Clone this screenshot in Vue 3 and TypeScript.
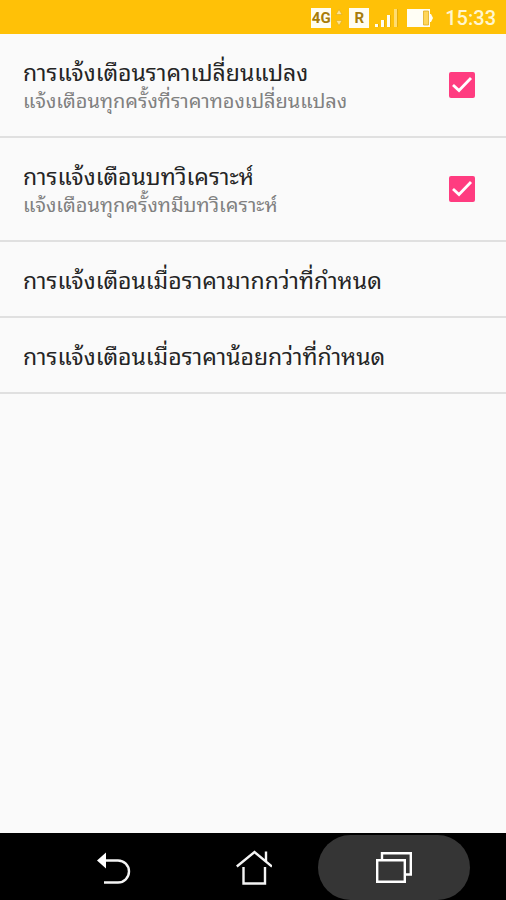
<script setup lang="ts">
import { reactive } from 'vue'

interface Preference {
  id: string
  title: string
  summary: string
  enabled: boolean
}

const toggles = reactive<Preference[]>([
  {
    id: 'price-change',
    title: 'การแจ้งเตือนราคาเปลี่ยนแปลง',
    summary: 'แจ้งเตือนทุกครั้งที่ราคาทองเปลี่ยนแปลง',
    enabled: true,
  },
  {
    id: 'analysis',
    title: 'การแจ้งเตือนบทวิเคราะห์',
    summary: 'แจ้งเตือนทุกครั้งทมีบทวิเคราะห์',
    enabled: true,
  },
])

const limits: string[] = [
  'การแจ้งเตือนเมื่อราคามากกว่าที่กำหนด',
  'การแจ้งเตือนเมื่อราคาน้อยกว่าที่กำหนด',
]
</script>

<template>
  <div class="screen">
    <header class="status">
      <span class="badge">4G</span>
      <svg class="arrows" width="8" height="20" viewBox="0 0 8 20">
        <path d="M1 6.500L4 1.500L7 6.500ZM1 12.500L4 17.500L7 12.500Z" fill="#ffe48f" stroke="#d6a51a" stroke-width=".5" />
      </svg>
      <span class="badge roaming">R</span>
      <svg class="signal" width="24" height="20" viewBox="0 0 24 20">
        <path d="M1 16h3v3H1zM7 12h3v7H7zM13 7h3v12h-3z" fill="#fffdf0" />
        <path d="M20 1h3v18h-3z" fill="#ffdc70" />
        <path d="M4.500 16v3M10.500 12v7M16.500 7v12M23.500 1v18" stroke="#d9a30c" stroke-width=".7" />
      </svg>
      <svg class="battery" width="26" height="20" viewBox="0 0 26 20">
        <path d="M0 1h23v5h1l2 4-2 4h-1v5H0z" fill="#fffef5" />
        <path d="M16.500 3h5v14h-5z" fill="#ffd65a" stroke="#e0ad20" stroke-width=".8" />
      </svg>
      <time class="clock">15:33</time>
    </header>

    <main class="list">
      <label v-for="item in toggles" :key="item.id" class="row toggle" :for="item.id">
        <span class="texts">
          <span class="title">{{ item.title }}</span>
          <span class="summary">{{ item.summary }}</span>
        </span>
        <span class="box">
          <input :id="item.id" v-model="item.enabled" type="checkbox" />
          <svg v-if="item.enabled" class="tick" width="26" height="26" viewBox="0 0 26 26">
            <path d="M4 13L10 18.500L22 6" fill="none" stroke="#fff" stroke-width="2.800" />
          </svg>
        </span>
      </label>
      <button v-for="limit in limits" :key="limit" type="button" class="row limit">
        <span class="title">{{ limit }}</span>
      </button>
    </main>

    <nav class="nav">
      <button type="button" aria-label="Back">
        <svg width="36" height="36" viewBox="0 0 36 36">
          <path d="M10 10.500H22A10.800 10.800 0 0 1 22 32.500H8" fill="none" stroke="#f4f4f4" stroke-width="2.400" />
          <path d="M1 10.500L10 2.500V18.500Z" fill="#fff" />
        </svg>
      </button>
      <button type="button" aria-label="Home">
        <svg width="36" height="36" viewBox="0 0 36 36">
          <path d="M.8 16.500L18.500 2L36 16.500M30 1.500V11.500M7.500 17V33.500H29V17" fill="none" stroke="#f4f4f4" stroke-width="2.400" />
        </svg>
      </button>
      <button type="button" class="active" aria-label="Recent apps">
        <svg width="36" height="36" viewBox="0 0 36 36">
          <path d="M6 9V3.200H34.800V24.500H30M1.200 10.200H28.800V31.800H1.200Z" fill="none" stroke="#fff" stroke-width="2.400" />
        </svg>
      </button>
    </nav>
  </div>
</template>

<style>
body {
  background: #fafafa;
}
</style>

<style scoped>
.screen {
  display: flex;
  flex-direction: column;
  min-height: 100vh;
  background: #fafafa;
  font-family: "Noto Sans Thai Looped", "Noto Looped Thai", "Droid Sans Thai", Loma, Waree, Garuda, "Noto Sans", sans-serif;
}

.status {
  display: flex;
  align-items: center;
  justify-content: flex-end;
  box-sizing: border-box;
  height: 34px;
  padding: 2px 10px 0 0;
  background: #ffc107;
  font-family: Roboto, sans-serif;
}

.badge {
  width: 20px;
  height: 20px;
  background: #fffdf0;
  color: #a87c08;
  font-size: 15px;
  font-weight: 700;
  line-height: 20px;
  text-align: center;
}

.arrows {
  margin: 0 6px 0 4px;
}

.roaming {
  margin-right: 5px;
}

.battery {
  margin: 0 12px 0 9px;
}

.clock {
  color: #fff6cf;
  font-size: 20px;
  font-weight: 500;
  line-height: 24px;
}

.list {
  flex: 1;
}

.row {
  display: flex;
  align-items: center;
  box-sizing: border-box;
  width: 100%;
  padding: 0 31px 0 23px;
  border: 0;
  border-bottom: 2px solid #e0e0e0;
  background: none;
  font-family: inherit;
  text-align: left;
}

.toggle {
  justify-content: space-between;
  min-height: 104px;
}

.limit {
  min-height: 76px;
}

.texts {
  display: flex;
  flex-direction: column;
}

.title {
  color: #242424;
  font-size: 23px;
  line-height: 28px;
}

.summary {
  color: #808080;
  font-size: 20px;
  line-height: 28px;
}

.box {
  position: relative;
  display: flex;
}

.box input {
  appearance: none;
  width: 26px;
  height: 26px;
  margin: 0;
  border: 2px solid #757575;
  border-radius: 2px;
}

.box input:checked {
  border-color: #ff3c80;
  background: #ff3c80;
}

.tick {
  position: absolute;
  inset: 0;
  pointer-events: none;
}

.nav {
  display: grid;
  grid-template-columns: repeat(3, 1fr);
  height: 67px;
  padding: 0 42px 0 44px;
  background: #000;
}

.nav button {
  display: flex;
  align-items: center;
  justify-content: center;
  margin: 2px -6px 0;
  padding: 0;
  border: 0;
  border-radius: 33px;
  background: none;
}

.nav .active {
  background: #353535;
}
</style>
